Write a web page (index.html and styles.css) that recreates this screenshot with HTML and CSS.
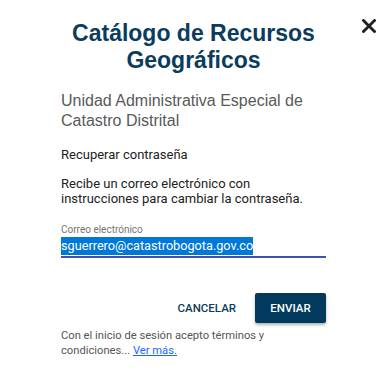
FILE: index.html
```html
<!DOCTYPE html>
<html lang="es">
<head>
<meta charset="utf-8">
<link rel="stylesheet" href="styles.css">
</head>
<body>
<div class="dialog">
  <button class="close" aria-label="Cerrar">
    <svg width="14" height="14" viewBox="0 0 14 14"><path d="M1.5 1.5 L12.5 12.5 M12.5 1.5 L1.5 12.5" stroke="#1f1f1f" stroke-width="2.8" stroke-linecap="square"/></svg>
  </button>
  <div class="content">
    <h1 class="title">Catálogo de Recursos Geográficos</h1>
    <p class="org">Unidad Administrativa Especial de Catastro Distrital</p>
    <p class="subtitle">Recuperar contraseña</p>
    <p class="desc">Recibe un correo electrónico con instrucciones para cambiar la contraseña.</p>
    <div class="field">
      <label class="label">Correo electrónico</label>
      <div class="input"><span class="sel">sguerrero@catastrobogota.gov.co</span></div>
    </div>
    <div class="actions">
      <button class="btn btn-text">CANCELAR</button>
      <button class="btn btn-primary">ENVIAR</button>
    </div>
    <p class="terms">Con el inicio de sesión acepto términos y condiciones... <a href="#" class="link">Ver más.</a></p>
  </div>
</div>
</body>
</html>
```
FILE: styles.css
```css
html, body {
  margin: 0;
  padding: 0;
  background: #ffffff;
}
.dialog {
  position: relative;
  width: 390px;
  height: 372px;
  box-sizing: border-box;
  padding: 20px 0 0 61px;
}
.close {
  position: absolute;
  top: 19px;
  right: 14px;
  border: 0;
  background: none;
  padding: 0;
  width: 14px;
  height: 14px;
}
.close svg { display: block; }
.content {
  width: 265px;
  display: flex;
  flex-direction: column;
}
.title {
  margin: 0;
  font-family: "Liberation Sans", Arial, sans-serif;
  font-weight: bold;
  font-size: 23px;
  line-height: 27px;
  color: #0b3c5d;
  text-align: center;
}
.org {
  margin: 17px 0 0;
  font-family: "Liberation Sans", Arial, sans-serif;
  font-size: 16px;
  line-height: 20px;
  color: #595959;
}
.subtitle {
  margin: 16px 0 0;
  font-family: Roboto, sans-serif;
  font-size: 13px;
  line-height: 16px;
  color: #222222;
}
.desc {
  margin: 13px 0 0;
  font-family: Roboto, sans-serif;
  font-size: 13px;
  line-height: 15px;
  color: #222222;
}
.field {
  margin-top: 18px;
  display: flex;
  flex-direction: column;
}
.label {
  font-family: Roboto, sans-serif;
  font-size: 10px;
  line-height: 12px;
  color: #757575;
}
.input {
  margin-top: 1px;
  height: 19px;
  border-bottom: 2px solid #3f51b5;
  display: flex;
  align-items: flex-start;
}
.sel {
  background: #0078d7;
  color: #ffffff;
  font-family: Roboto, sans-serif;
  font-size: 12.7px;
  line-height: 18px;
}
.actions {
  margin-top: 35px;
  display: flex;
  justify-content: flex-end;
  align-items: center;
  gap: 19px;
}
.btn {
  font-family: Roboto, sans-serif;
  font-weight: 500;
  font-size: 11.5px;
  letter-spacing: 0;
  border: 0;
  border-radius: 2px;
  cursor: pointer;
}
.btn-text {
  background: none;
  color: #0b3c5d;
  padding: 0;
}
.btn-primary {
  background: #013a5c;
  color: #ffffff;
  width: 71px;
  height: 30px;
  box-shadow: 0 2px 3px rgba(0,0,0,0.3);
}
.terms {
  margin: 5px 0 0;
  font-family: Roboto, sans-serif;
  font-size: 11.2px;
  line-height: 15px;
  color: #555555;
}
.link {
  color: #1a66ff;
  text-decoration: underline;
}
```
